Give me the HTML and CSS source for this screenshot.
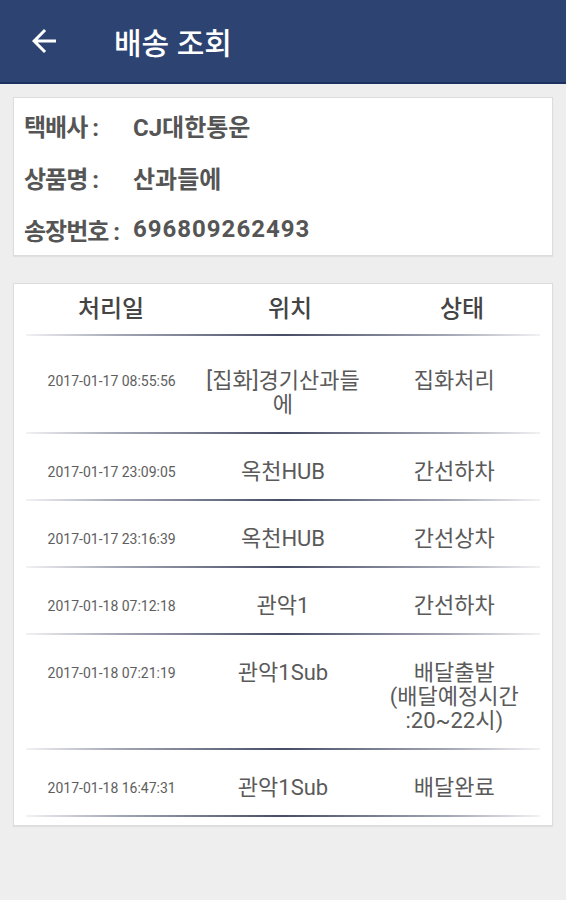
FILE: index.html
```html
<!DOCTYPE html>
<html lang="ko">
<head>
    <meta charset="UTF-8">
    <meta name="viewport" content="width=device-width, initial-scale=1.0">
    <title>배송 조회</title>
    <link rel="stylesheet" href="styles.css">
</head>
<body>
    <div class="appbar">
        <svg class="back" viewBox="0 0 24 24" width="36" height="36">
            <path d="M20 11H7.83l5.59-5.59L12 4l-8 8 8 8 1.41-1.41L7.83 13H20v-2z" fill="#fff"/>
        </svg>
        <h1>배송 조회</h1>
    </div>

    <div class="content">
        <div class="card info">
            <div class="info-row"><span class="label">택배사 :</span><span class="value">CJ대한통운</span></div>
            <div class="info-row"><span class="label">상품명 :</span><span class="value">산과들에</span></div>
            <div class="info-row"><span class="label">송장번호 :</span><span class="value num">696809262493</span></div>
        </div>

        <div class="card track">
            <div class="track-head">
                <span>처리일</span>
                <span>위치</span>
                <span>상태</span>
            </div>
            <div class="track-row">
                <span class="date">2017-01-17 08:55:56</span>
                <span class="cell">[집화]경기산과들에</span>
                <span class="cell">집화처리</span>
            </div>
            <div class="track-row">
                <span class="date">2017-01-17 23:09:05</span>
                <span class="cell">옥천HUB</span>
                <span class="cell">간선하차</span>
            </div>
            <div class="track-row">
                <span class="date">2017-01-17 23:16:39</span>
                <span class="cell">옥천HUB</span>
                <span class="cell">간선상차</span>
            </div>
            <div class="track-row">
                <span class="date">2017-01-18 07:12:18</span>
                <span class="cell">관악1</span>
                <span class="cell">간선하차</span>
            </div>
            <div class="track-row">
                <span class="date">2017-01-18 07:21:19</span>
                <span class="cell">관악1Sub</span>
                <span class="cell">배달출발<br>(배달예정시간<br>:20~22시)</span>
            </div>
            <div class="track-row">
                <span class="date">2017-01-18 16:47:31</span>
                <span class="cell">관악1Sub</span>
                <span class="cell">배달완료</span>
            </div>
        </div>
    </div>
</body>
</html>
```

FILE: styles.css
```css
body {
    margin: 0;
    background-color: #eeeeee;
    font-family: "Roboto", "Noto Sans CJK KR", sans-serif;
    color: #555;
}
.appbar {
    box-sizing: border-box;
    height: 84px;
    display: flex;
    align-items: center;
    padding-left: 26px;
    background-color: #2d4472;
    border-bottom: 2px solid #1d3160;
}
.appbar h1 {
    margin: 0 0 0 52px;
    font-size: 30px;
    font-weight: 500;
    color: #fff;
}
.back {
    display: block;
}
.content {
    padding: 13px;
}
.card {
    background-color: #fff;
    border: 1px solid #dcdcdc;
    box-shadow: 0 1px 1px rgba(0, 0, 0, 0.06);
}
.info {
    padding: 1px 10px 0;
}
.info-row {
    display: flex;
    height: 52px;
    align-items: center;
    font-size: 24px;
    font-weight: bold;
}
.label {
    width: 109px;
    flex-shrink: 0;
    letter-spacing: -1px;
}
.value.num {
    letter-spacing: 1px;
}
.track {
    margin-top: 27px;
    padding: 0 12px 8px;
}
.track-head {
    display: grid;
    grid-template-columns: 170px 188px 1fr;
    text-align: center;
    line-height: 50px;
    font-size: 24px;
    font-weight: 500;
    color: #444;
}
.track-head,
.track-row {
    padding-bottom: 2px;
    background: linear-gradient(to right, #f2f2f4, #a3a6b4 18%, #474d66 50%, #a3a6b4 82%, #f2f2f4) bottom / 100% 2px no-repeat;
}
.track-row {
    display: grid;
    grid-template-columns: 1fr 1fr 1fr;
    text-align: center;
    padding-top: 26px;
    padding-bottom: 17px;
    line-height: 24px;
    font-size: 22px;
    color: #5a5a5a;
}
.track-row:nth-child(2) {
    padding-top: 33px;
}
.cell {
    padding: 0 4px;
}
.date {
    font-size: 14px;
    color: #5e5e5e;
}
```
